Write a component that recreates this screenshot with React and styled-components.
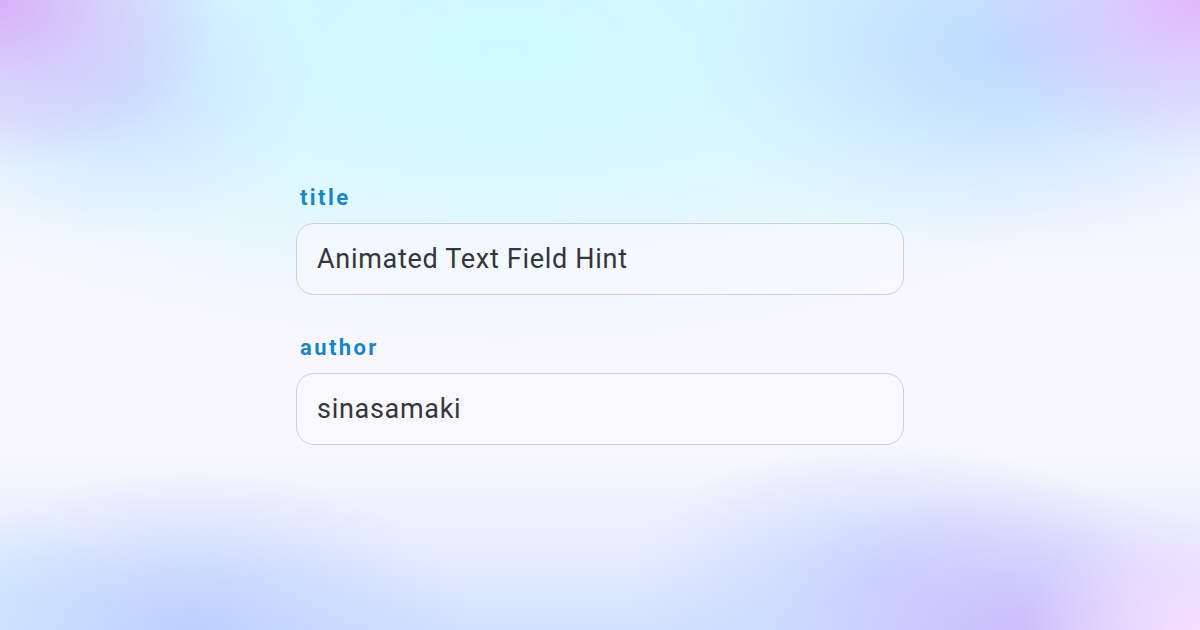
import React from "react";
import styled, { createGlobalStyle } from "styled-components";

const GlobalStyle = createGlobalStyle`
  html, body {
    margin: 0;
    padding: 0;
    height: 100%;
  }
  body {
    font-family: Roboto, "Noto Sans", sans-serif;
    background-color: #f8f7fd;
    background-image:
      radial-gradient(ellipse 220px 170px at 0% 0%, rgba(216, 172, 248, 0.95), rgba(216, 172, 248, 0.4) 50%, rgba(216, 172, 248, 0) 100%),
      radial-gradient(ellipse 230px 160px at 100% 0%, rgba(228, 180, 252, 0.95), rgba(228, 180, 252, 0.4) 50%, rgba(228, 180, 252, 0) 100%),
      radial-gradient(ellipse 200px 150px at 10% 14%, rgba(196, 214, 255, 0.7), rgba(196, 214, 255, 0) 100%),
      radial-gradient(ellipse 320px 200px at 84% 8%, rgba(182, 214, 255, 0.85), rgba(182, 214, 255, 0.4) 50%, rgba(182, 214, 255, 0) 100%),
      radial-gradient(ellipse 680px 300px at 42% 8%, rgba(204, 250, 255, 1), rgba(204, 250, 255, 0.55) 50%, rgba(204, 250, 255, 0) 100%),
      linear-gradient(180deg, rgba(220, 240, 255, 0.85) 0%, rgba(234, 245, 255, 0.6) 28%, rgba(242, 246, 255, 0.3) 40%, rgba(248, 247, 253, 0) 52%),
      radial-gradient(ellipse 180px 120px at 100% 100%, rgba(246, 222, 255, 1), rgba(246, 222, 255, 0) 100%),
      radial-gradient(ellipse 260px 150px at 85% 100%, rgba(204, 188, 252, 0.95), rgba(204, 188, 252, 0.4) 50%, rgba(204, 188, 252, 0) 100%),
      radial-gradient(ellipse 280px 160px at 16% 100%, rgba(188, 206, 255, 0.95), rgba(188, 206, 255, 0.4) 50%, rgba(188, 206, 255, 0) 100%),
      radial-gradient(ellipse 260px 140px at 74% 92%, rgba(196, 212, 255, 0.85), rgba(196, 212, 255, 0) 100%),
      radial-gradient(ellipse 160px 120px at 0% 100%, rgba(210, 236, 255, 1), rgba(210, 236, 255, 0) 100%),
      linear-gradient(0deg, rgba(208, 224, 255, 0.95) 0%, rgba(222, 232, 255, 0.6) 14%, rgba(248, 247, 253, 0) 28%);
  }
  #root {
    min-height: 630px;
  }
`;

const Page = styled.main`
  display: flex;
  justify-content: center;
  padding-top: 186px;
`;

const Form = styled.div`
  width: 608px;
  display: flex;
  flex-direction: column;
  gap: 41px;
`;

const Field = styled.label`
  display: flex;
  flex-direction: column;
  gap: 13px;
`;

const Label = styled.span`
  padding-left: 4px;
  font-size: 22px;
  line-height: 24px;
  font-weight: 700;
  letter-spacing: 2.4px;
  color: #1786c8;
`;

const Input = styled.input`
  box-sizing: border-box;
  width: 100%;
  height: 72px;
  padding: 0 20px;
  border: 1px solid #cfd0dc;
  border-radius: 18px;
  background: rgba(250, 249, 255, 0.55);
  font-family: Roboto, "Noto Sans", sans-serif;
  font-size: 27px;
  letter-spacing: 0.7px;
  color: #35353d;
  outline: none;
`;

const fields = [
  { name: "title", value: "Animated Text Field Hint" },
  { name: "author", value: "sinasamaki" },
];

const App = () => {
  return (
    <>
      <GlobalStyle />
      <Page>
        <Form>
          {fields.map((f) => (
            <Field key={f.name}>
              <Label>{f.name}</Label>
              <Input readOnly defaultValue={f.value} />
            </Field>
          ))}
        </Form>
      </Page>
    </>
  );
};

export default App;
